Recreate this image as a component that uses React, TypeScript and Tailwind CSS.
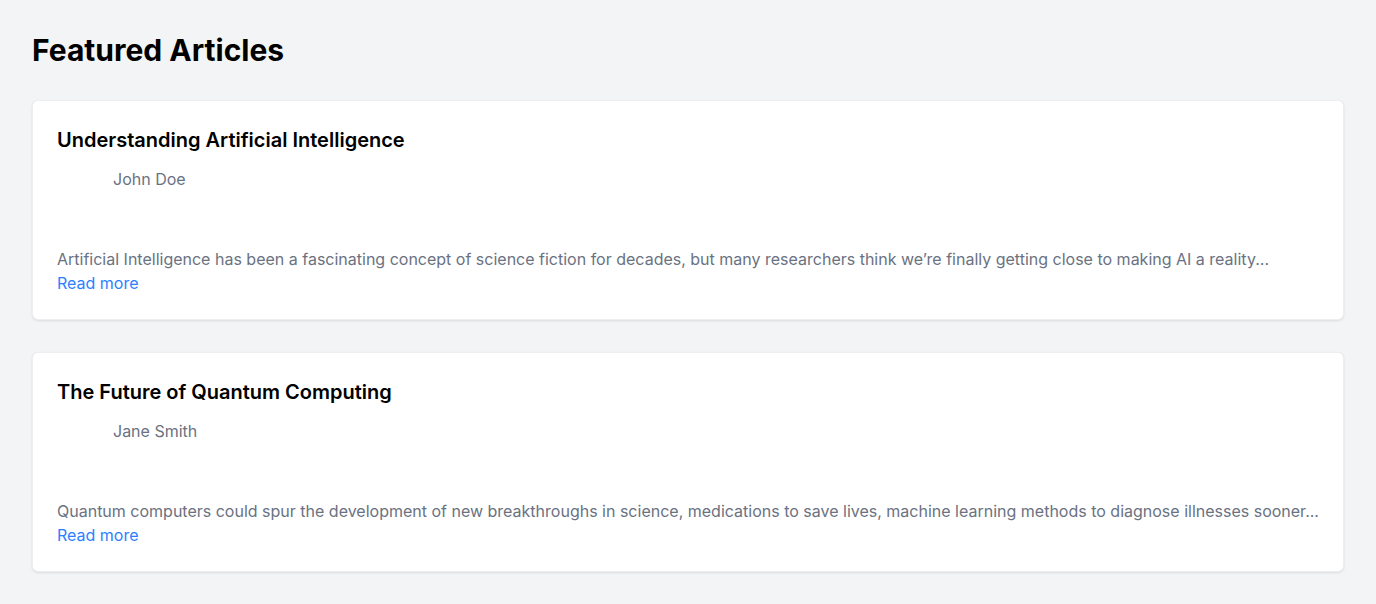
const articles = [
  {
    title: 'Understanding Artificial Intelligence',
    author: 'John Doe',
    excerpt:
      'Artificial Intelligence has been a fascinating concept of science fiction for decades, but many researchers think we\u2019re finally getting close to making AI a reality...',
  },
  {
    title: 'The Future of Quantum Computing',
    author: 'Jane Smith',
    excerpt:
      'Quantum computers could spur the development of new breakthroughs in science, medications to save lives, machine learning methods to diagnose illnesses sooner...',
  },
];

const ArticleCard = ({ title, author, excerpt }: { title: string; author: string; excerpt: string }) => (
  <div className="rounded-md border border-gray-200/70 bg-white p-6 shadow-[0_1px_3px_rgba(0,0,0,0.08),0_1px_2px_-1px_rgba(0,0,0,0.08)]">
    <h2 className="pt-px text-xl leading-7 font-semibold text-black">{title}</h2>
    <div className="mt-[13px] flex items-start">
      <div className="mr-4 h-16 w-10" />
      <span className="text-base leading-6 text-gray-500">{author}</span>
    </div>
    <p className="mt-4 text-base leading-6 text-gray-500">{excerpt}</p>
    <a href="#" className="block text-base leading-6 text-blue-500">
      Read more
    </a>
  </div>
);

export default function App() {
  return (
    <div className="min-h-[604px] bg-gray-100 p-8 font-['Inter',sans-serif]">
      <h1 className="mb-8 text-3xl leading-9 font-bold text-black">Featured Articles</h1>
      <div className="flex flex-col gap-8">
        {articles.map((a) => (
          <ArticleCard key={a.title} {...a} />
        ))}
      </div>
    </div>
  );
}
